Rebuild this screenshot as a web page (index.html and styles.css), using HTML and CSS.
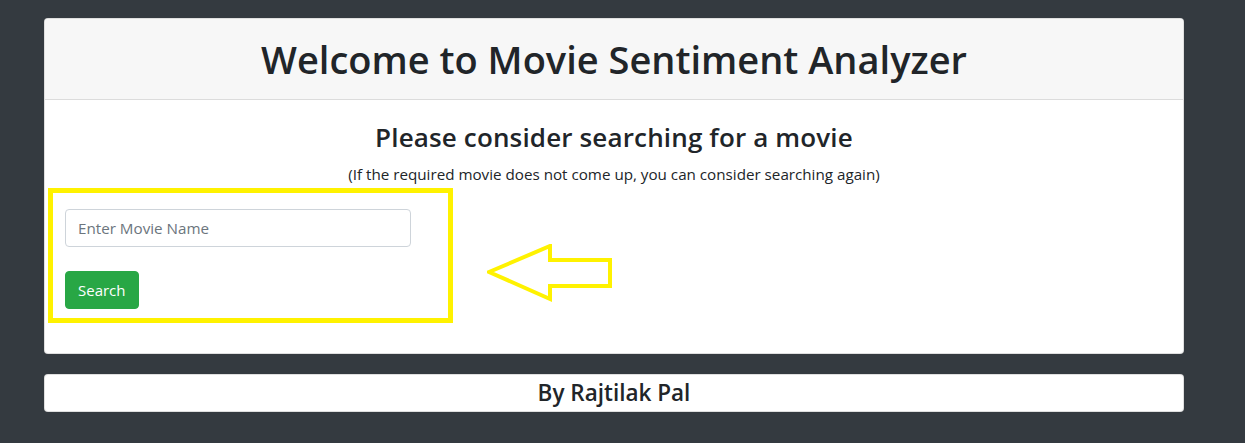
FILE: index.html
```html
<!DOCTYPE html>
<html>
<head>
<meta charset="utf-8">
<link rel="stylesheet" href="styles.css">
</head>
<body>
<div class="page">
  <div class="card main">
    <div class="card-header">
      <h1 class="title">Welcome to Movie Sentiment Analyzer</h1>
    </div>
    <div class="card-body">
      <h3 class="subtitle">Please consider searching for a movie</h3>
      <p class="hint">(If the required movie does not come up, you can consider searching again)</p>
      <form class="search-form">
        <input class="form-control" type="text" placeholder="Enter Movie Name">
        <button class="btn" type="button">Search</button>
      </form>
      <div class="highlight-box"></div>
      <svg class="arrow" width="130" height="60" viewBox="0 0 130 60">
        <polygon points="2,28 63,2 63,16 123,16 123,42 63,42 63,55" fill="none" stroke="#fff200" stroke-width="4" stroke-linejoin="miter"/>
      </svg>
    </div>
  </div>
  <div class="card footer">
    <h4 class="author">By Rajtilak Pal</h4>
  </div>
</div>
</body>
</html>
```

FILE: styles.css
```css
* { box-sizing: border-box; }
html, body {
  margin: 0;
  padding: 0;
  background: #343a40;
  height: 100%;
}
body {
  font-family: "Open Sans", "Noto Sans", sans-serif;
  color: #212529;
}
.page {
  padding: 18px 0 0 44px;
}
.card {
  width: 1140px;
  background: #fff;
  border: 1px solid rgba(0,0,0,.125);
  border-radius: 4px;
}
.card-header {
  background: #f7f7f7;
  border-bottom: 1px solid #dcdcdc;
  border-radius: 4px 4px 0 0;
  height: 81px;
  display: flex;
  align-items: center;
  justify-content: center;
}
.title {
  margin: 0;
  font-size: 38px;
  font-weight: 600;
  line-height: 48px;
}
.card-body {
  position: relative;
  padding: 20px 20px 44px;
  text-align: center;
}
.subtitle {
  margin: 0 0 8px;
  font-size: 26px;
  font-weight: 600;
  line-height: 34px;
  letter-spacing: 0.15px;
}
.hint {
  margin: 0;
  font-size: 15.2px;
  line-height: 24px;
}
.search-form {
  display: flex;
  flex-direction: column;
  align-items: flex-start;
  gap: 24px;
  margin-top: 23px;
}
.form-control {
  width: 346px;
  height: 38px;
  padding: 6px 12px;
  font-family: inherit;
  font-size: 15.2px;
  color: #495057;
  border: 1px solid #ced4da;
  border-radius: 4px;
  background: #fff;
}
.form-control::placeholder { color: #6c757d; }
.btn {
  height: 38px;
  padding: 0 12px;
  font-family: inherit;
  font-size: 15px;
  color: #fff;
  background: #28a745;
  border: 1px solid #28a745;
  border-radius: 4px;
}
.highlight-box {
  position: absolute;
  left: 3px;
  top: 88px;
  width: 405px;
  height: 135px;
  border: 5px solid #fff200;
}
.arrow {
  position: absolute;
  left: 442px;
  top: 144px;
}
.footer {
  margin-top: 20px;
  height: 38px;
  display: flex;
  align-items: center;
  justify-content: center;
}
.author {
  margin: 0;
  font-size: 22.5px;
  font-weight: 600;
  line-height: 30px;
}
```
